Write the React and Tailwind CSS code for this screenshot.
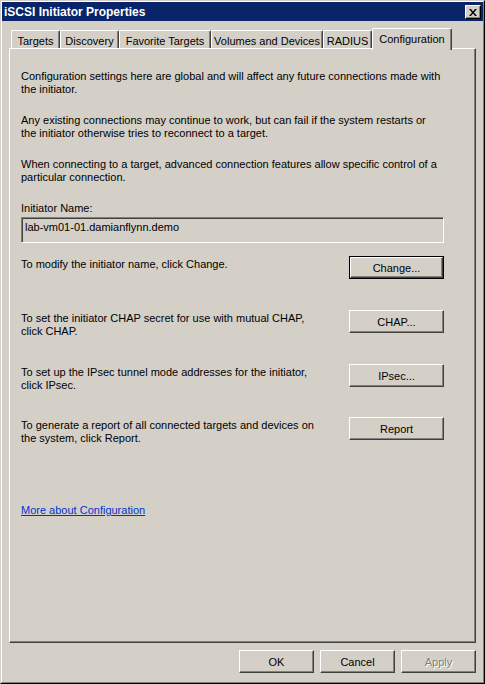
import React from 'react'

const tabs = [
  { label: 'Targets', w: 'w-[49px]' },
  { label: 'Discovery', w: 'w-[59px]' },
  { label: 'Favorite Targets', w: 'w-[92px]' },
  { label: 'Volumes and Devices', w: 'w-[112px]' },
  { label: 'RADIUS', w: 'w-[49px]' },
]

const Button = ({ children, isDefault, disabled, className = '' }) => {
  const bevel = (
    <div className="flex h-full w-full items-center justify-center border border-t-white border-l-white border-r-[#404040] border-b-[#404040] shadow-[inset_-1px_-1px_0_#808080]">
      <span className={`pt-[2px] ${disabled ? 'text-[#808080] [text-shadow:1px_1px_0_#ffffff]' : ''}`}>{children}</span>
    </div>
  )
  if (isDefault) {
    return <div className={`h-[23px] border border-black ${className}`}>{bevel}</div>
  }
  return <div className={`h-[23px] ${className}`}>{bevel}</div>
}

const ActionRow = ({ lines, label, isDefault, className = '' }) => (
  <div className={`flex items-start ${className}`}>
    <div className="w-[328px] pt-[2px]">
      {lines.map((l) => (
        <div key={l}>{l}</div>
      ))}
    </div>
    <Button isDefault={isDefault} className="w-[95px]">
      {label}
    </Button>
  </div>
)

const App = () => {
  return (
    <div className="h-[684px] w-[485px] border border-t-[#d4d0c8] border-l-[#d4d0c8] border-r-black border-b-black bg-[#d4d0c8] font-['Liberation_Sans',Arial,sans-serif] text-[11px] leading-[13px] text-black">
      <div className="flex h-full flex-col border border-t-white border-l-white border-r-[#808080] border-b-[#808080]">
        {/* title bar */}
        <div className="flex h-[19px] items-center justify-between bg-[#0a246a] pl-[2px] pr-[2px]">
          <span className="pt-[1px] text-[12px] font-bold text-white">iSCSI Initiator Properties</span>
          <div className="mt-[1px] flex h-[14px] w-[16px] items-center justify-center border border-t-white border-l-white border-r-black border-b-black bg-[#d4d0c8] shadow-[inset_-1px_-1px_0_#808080]">
            <svg width="8" height="7" viewBox="0 0 8 7" className="mr-[1px]">
              <path d="M0 0h2l2 2.5L6 0h2L5 3.5 8 7H6L4 4.5 2 7H0l3-3.5z" fill="#000" />
            </svg>
          </div>
        </div>

        <div className="flex flex-1 flex-col px-[7px]">
          {/* tabs */}
          <div className="relative z-10 mt-[7px] -mb-[2px] flex h-[22px] items-start pl-[2px]">
            {tabs.map((t) => (
              <div
                key={t.label}
                className={`mt-[2px] flex h-[18px] ${t.w} items-center justify-center rounded-t-[2px] border-t border-l border-r border-t-white border-l-white border-r-[#404040] shadow-[inset_-1px_0_0_#808080]`}
              >
                <span className="mt-[3px]">{t.label}</span>
              </div>
            ))}
            <div className="flex h-[22px] w-[80px] items-start justify-center rounded-t-[2px] border-t border-l border-r border-t-white border-l-white border-r-[#404040] bg-[#d4d0c8] pt-[4px] shadow-[inset_-1px_0_0_#808080]">
              Configuration
            </div>
          </div>

          {/* panel */}
          <div className="h-[595px] w-[467px] border border-t-white border-l-white border-r-[#404040] border-b-[#404040] pl-[11px] pt-[21px] shadow-[inset_-1px_-1px_0_#808080]">
            <p>
              Configuration settings here are global and will affect any future connections made with
              <br />
              the initiator.
            </p>
            <p className="mt-[18px]">
              Any existing connections may continue to work, but can fail if the system restarts or
              <br />
              the initiator otherwise tries to reconnect to a target.
            </p>
            <p className="mt-[18px]">
              When connecting to a target, advanced connection features allow specific control of a
              <br />
              particular connection.
            </p>

            <div className="mt-[18px]">Initiator Name:</div>
            <div className="mt-[2px] h-[26px] w-[423px] border border-t-[#808080] border-l-[#808080] border-r-white border-b-white pl-[3px] pt-[3px] shadow-[inset_1px_1px_0_#404040]">
              lab-vm01-01.damianflynn.demo
            </div>

            <ActionRow
              className="mt-[13px] h-[54px]"
              lines={['To modify the initiator name, click Change.']}
              label="Change..."
              isDefault
            />
            <ActionRow
              className="h-[54px]"
              lines={['To set the initiator CHAP secret for use with mutual CHAP,', 'click CHAP.']}
              label="CHAP..."
            />
            <ActionRow
              className="h-[53px]"
              lines={['To set up the IPsec tunnel mode addresses for the initiator,', 'click IPsec.']}
              label="IPsec..."
            />
            <ActionRow
              lines={['To generate a report of all connected targets and devices on', 'the system, click Report.']}
              label="Report"
            />

            <a href="#" className="mt-[59px] inline-block text-[#0033cc] underline">
              More about Configuration
            </a>
          </div>

          {/* dialog buttons */}
          <div className="mt-[7px] flex justify-end gap-[6px]">
            <Button className="w-[75px]">OK</Button>
            <Button className="w-[75px]">Cancel</Button>
            <Button className="w-[75px]" disabled>
              Apply
            </Button>
          </div>
        </div>
      </div>
    </div>
  )
}

export default App
